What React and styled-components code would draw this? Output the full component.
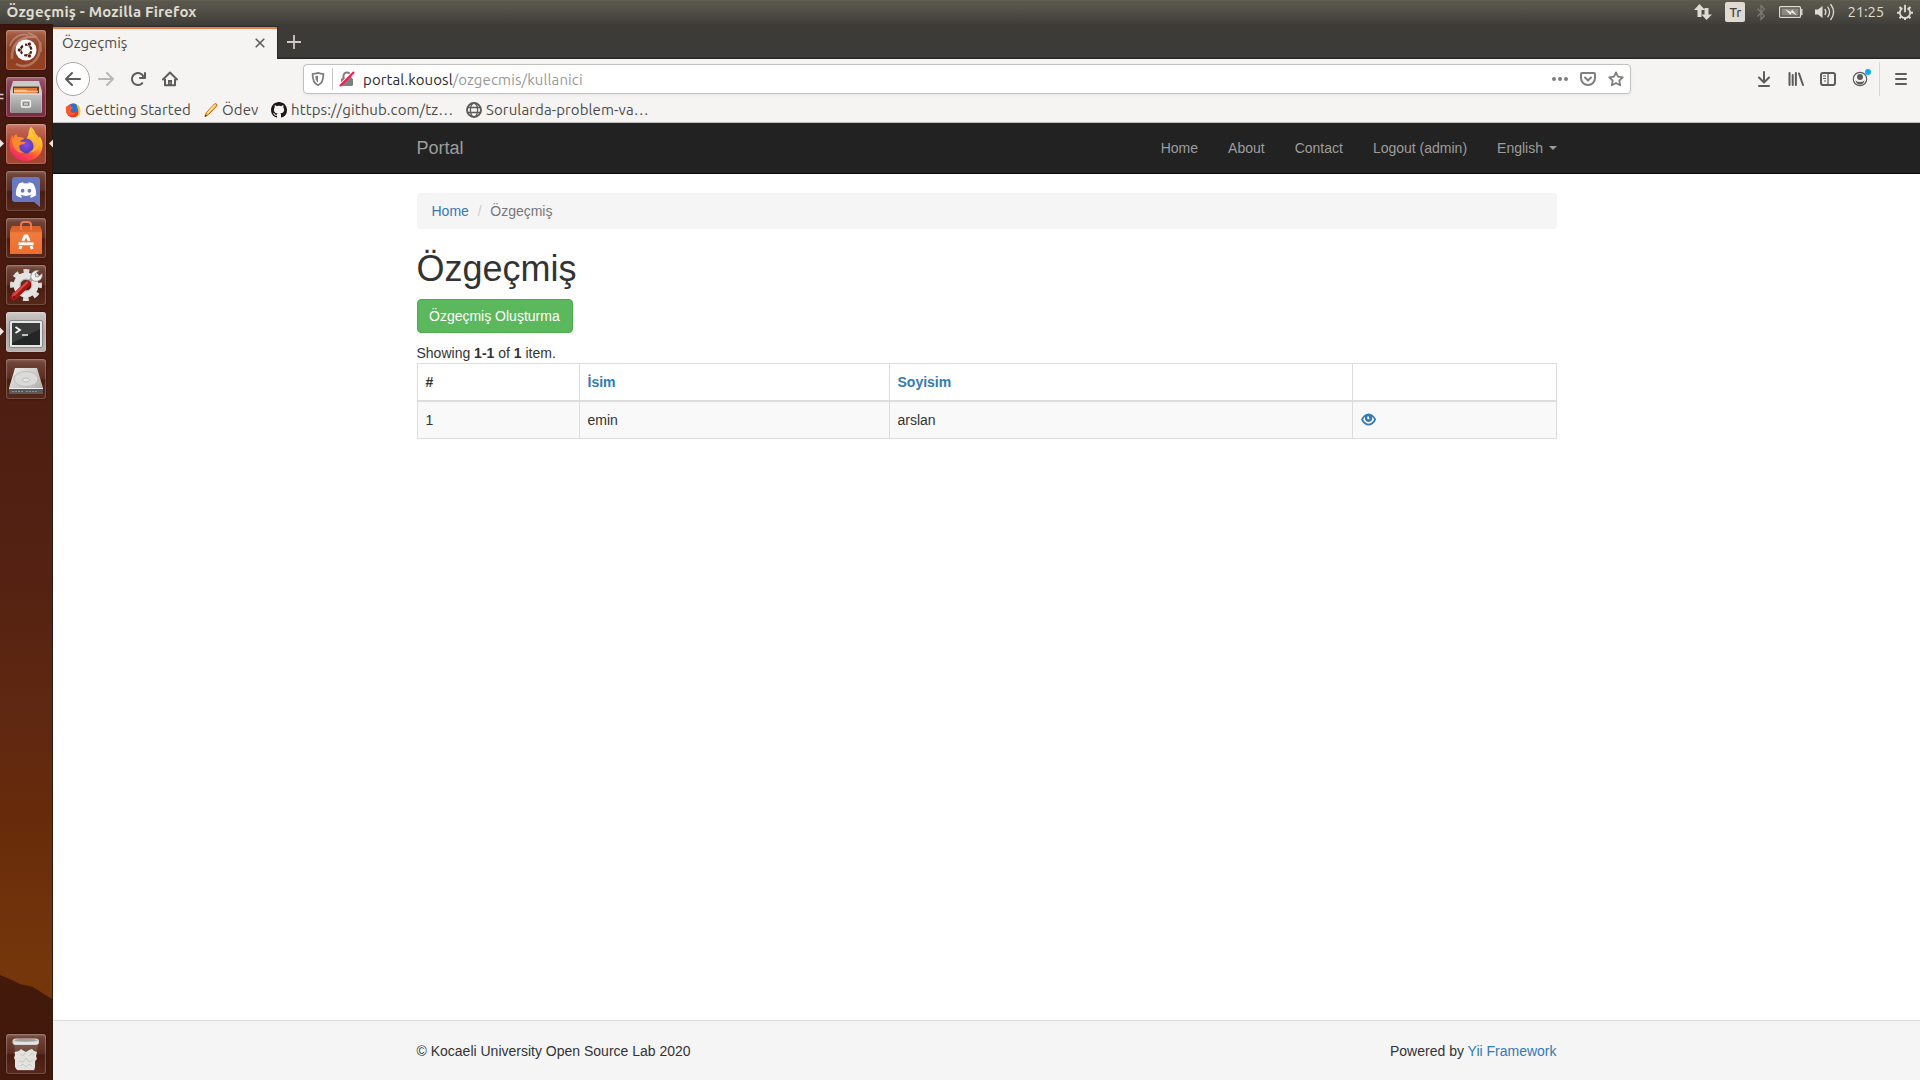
import React from "react";
import styled, { createGlobalStyle } from "styled-components";
import { FaDiscord } from "react-icons/fa";

const uiFont = `Ubuntu, "Noto Sans", "Open Sans", sans-serif`;

const GlobalStyle = createGlobalStyle`
  *, *::before, *::after { box-sizing: border-box; }
  body { margin: 0; background: #fff; overflow: hidden; }
  svg { display: block; flex: none; }
`;

/* ---------- desktop ---------- */
const Desktop = styled.div`
  width: 1920px;
  height: 1080px;
  display: grid;
  grid-template: 24px 1056px / 53px 1867px;
  overflow: hidden;
`;
const TopPanel = styled.header`
  grid-column: 1 / -1;
  display: flex;
  align-items: center;
  justify-content: space-between;
  padding: 0 7.500px 0 6.500px;
  background: linear-gradient(#66634f 0, #5a574e 1px, #555249 8px, #3f3e39 24px);
  font-family: ${uiFont};
  color: #dfdbd2;
`;
const Text = styled.span`
  font-family: ${uiFont};
  font-size: ${(p) => p.$size || 15}px;
  font-weight: ${(p) => p.$weight || 400};
  letter-spacing: ${(p) => p.$track ?? 0.11}px;
  color: ${(p) => p.$color || "inherit"};
  line-height: 20px;
  white-space: pre;
`;
const Tray = styled.div`
  display: flex;
  align-items: center;
`;
const TrayItem = styled.div`
  display: flex;
  margin-left: ${(p) => p.$gap}px;
`;
const Layout = styled.div`
  width: 20px;
  height: 20px;
  border-radius: 2px;
  background: #dfdbd2;
  color: #45443e;
  display: flex;
  align-items: center;
  justify-content: center;
`;

/* ---------- launcher ---------- */
const Launcher = styled.aside`
  position: relative;
  display: flex;
  flex-direction: column;
  gap: 7px;
  padding: 6px 6px 6px;
  border-right: 1px solid #2a1a16;
  background: linear-gradient(#38120a 0, #43180d 12px, #47190e 200px, #4e1e12 376px, #552212 560px, #5f2811 690px, #672b0b 790px, #74360a 940px, #7a3b0a 1056px);
`;
const Hill = styled.svg`
  position: absolute;
  left: 0;
  bottom: 0;
`;
const Tile = styled.div`
  position: relative;
  width: 40px;
  height: 40px;
  flex: none;
  border-radius: 3px;
  background: ${(p) => p.$bg};
  box-shadow: inset 0 0 0 1px rgba(255, 255, 255, 0.17), inset 0 2px 3px rgba(255, 255, 255, 0.16), 0 0 2px rgba(0, 0, 0, 0.6);
  margin-top: ${(p) => (p.$last ? "auto" : 0)};
`;
const Pip = styled.svg`
  position: absolute;
  top: 15px;
  ${(p) => (p.$right ? "right: -7px;" : "left: -6px;")}
`;

/* ---------- browser ---------- */
const Browser = styled.main`
  display: flex;
  flex-direction: column;
  background: #fff;
`;
const TabStrip = styled.div`
  height: 35px;
  padding-top: 2px;
  display: flex;
  background: linear-gradient(#3c3b37 33px, #272622 34px);
`;
const Tab = styled.div`
  width: 225px;
  display: flex;
  align-items: center;
  justify-content: space-between;
  padding: 0 12px 1px 9px;
  background: #f5f4f2;
  border-top: 1px solid #2c2a26;
  border-right: 1px solid #2c2a26;
  box-shadow: inset 0 2px 0 #ee7f4d;
  color: #4c4c4c;
`;
const NewTab = styled.div`
  padding: 9px 0 0 9px;
`;
const Toolbar = styled.div`
  height: 40px;
  display: flex;
  align-items: center;
  padding: 0 3px;
  background: #f5f4f2;
  color: #5c5c5b;
`;
const BackButton = styled.div`
  width: 34px;
  height: 34px;
  border-radius: 50%;
  border: 1px solid #aaa9a7;
  background: #fff;
  display: flex;
  align-items: center;
  justify-content: center;
`;
const ToolIcon = styled.div`
  width: 32px;
  flex: none;
  display: flex;
  justify-content: center;
`;
const AddressBar = styled.div`
  width: 1328px;
  height: 30px;
  flex: none;
  margin: 0 117px;
  display: flex;
  align-items: center;
  background: #fff;
  border: 1px solid #c3c1bd;
  border-radius: 4px;
  box-shadow: 0 1px 3px rgba(0, 0, 0, 0.06);
  padding: 0 6px;
  color: #7f7f7f;
`;
const Address = styled.div`
  flex: 1;
  margin-left: 8px;
  padding-top: 1px;
  display: flex;
`;
const Divider = styled.div`
  width: 1px;
  height: ${(p) => p.$h}px;
  background: ${(p) => p.$c};
  margin: ${(p) => p.$m};
`;
const UrlIcons = styled.div`
  display: flex;
  gap: 12px;
`;
const Bookmarks = styled.div`
  height: 24px;
  display: flex;
  align-items: center;
  padding: 0 0 1px 12px;
  background: #f5f4f2;
  border-bottom: 1px solid #c0bfbd;
  color: #4c4c4c;
`;
const Bookmark = styled.div`
  display: flex;
  align-items: center;
  gap: 4px;
  width: ${(p) => p.$w}px;
`;

/* ---------- page ---------- */
const Page = styled.div`
  flex: 1;
  display: flex;
  flex-direction: column;
  font: 14px/20px "Helvetica Neue", "Liberation Sans", Arial, sans-serif;
  color: #333;
`;
const Container = styled.div`
  width: 1140px;
  margin: 0 auto;
`;
const Navbar = styled.nav`
  height: 51px;
  background: #222;
  border-bottom: 1px solid #080808;
`;
const NavRow = styled(Container)`
  display: flex;
  justify-content: space-between;
  color: #9d9d9d;
`;
const Brand = styled.div`
  font-size: 18px;
  padding: 15px 0;
`;
const NavLinks = styled.div`
  display: flex;
  margin-right: -15.500px;
`;
const NavLink = styled.a`
  padding: 15px;
  display: flex;
  align-items: center;
`;
const Caret = styled.i`
  margin-left: 6px;
  border-top: 4px solid;
  border-left: 4px solid transparent;
  border-right: 4px solid transparent;
`;
const Content = styled(Container)`
  flex: 1;
  padding-top: 19px;
`;
const Breadcrumb = styled.div`
  height: 36px;
  padding: 8px 15px;
  border-radius: 4px;
  background: #f5f5f5;
  color: #777;
`;
const Slash = styled.span`
  color: #ccc;
  padding: 0 8.500px 0 9px;
`;
const Link = styled.a`
  color: #337ab7;
`;
const Title = styled.h1`
  margin: 20px 0 10px;
  font-size: 36px;
  font-weight: 400;
  line-height: 40px;
`;
const CreateButton = styled.button`
  display: block;
  height: 34px;
  padding: 6px 12px 6px 11.500px;
  font: inherit;
  color: #fff;
  background: #5cb85c;
  border: 1px solid #4cae4c;
  border-radius: 4px;
  margin-bottom: 10px;
`;
const Table = styled.table`
  width: 1139px;
  table-layout: fixed;
  border-collapse: collapse;
  th, td {
    border: 1px solid #ddd;
    padding: 8px;
    text-align: left;
    height: 37px;
  }
  th { border-bottom-width: 2px; }
  td { background: #f9f9f9; }
`;
const Col = styled.col`
  width: ${(p) => p.$w}px;
`;
const Footer = styled.footer`
  height: 60px;
  background: #f5f5f5;
  border-top: 1px solid #ddd;
  padding-top: 20px;
`;
const FooterRow = styled(Container)`
  display: flex;
  justify-content: space-between;
`;

/* ---------- icons ---------- */
const Svg = ({ s = 16, w = s, h = s, children, ...rest }) => (
  <svg width={w} height={h} viewBox={`0 0 ${w} ${h}`} fill="none" {...rest}>
    {children}
  </svg>
);

const Firefox = ({ size }) => (
  <svg width={size} height={size} viewBox="0 0 40 40">
    <defs>
      <linearGradient id="fx" x1=".8" y1=".05" x2=".25" y2=".95">
        <stop offset="0" stopColor="#fff04a" />
        <stop offset=".35" stopColor="#ffb02e" />
        <stop offset=".65" stopColor="#ff5a36" />
        <stop offset="1" stopColor="#f0246a" />
      </linearGradient>
      <radialGradient id="fxb" cx=".5" cy=".4" r=".6">
        <stop offset="0" stopColor="#8a4be8" />
        <stop offset="1" stopColor="#4d3bb8" />
      </radialGradient>
    </defs>
    <path fill="url(#fx)" d="M25 3c2 2 4 4 4.500 7 1.500 1 2.500 2 3.500 4l.8-1.500C36 16 37 19 36.500 23 35.500 31.500 28.500 37 20 37 11 37 4 30.500 3.500 22 3.300 17 5 13 6.500 11l.6 3c1-2 2.200-3.200 3.400-4 0 1.500.5 2.500 1.500 3.200 3-.6 5 .5 6.500 1.800 0 0-3.500.3-4.500 2.500l6-1c1-4 2.500-5 2.500-6.500C22.500 8 23 5 25 3z" />
    <circle cx="20" cy="22" r="7.500" fill="url(#fxb)" />
    <path fill="#ff8a2a" d="M6 16c4-4 8-3.800 12.500-1-3 .4-4 1.200-4.500 2.500 2 .5 4 0 6 .8-2 2.500-5 1.700-6.500 3.200-.6 3 1 6 5 7-6 1.500-12-3-12.500-12.500z" />
    <path fill="#ffb42c" d="M25 3c-2 5 5 9 4.500 17-.3 4-3 7-7 8.500 7 .5 11-4 11-10.500C33.500 11 27 9 25 3z" opacity=".85" />
  </svg>
);

const Ubuntu = () => (
  <Svg s={40}>
    <g stroke="#fff" fill="none" opacity=".28" strokeWidth="2.500">
      <path d="M6 29C5 15 14 5 31 7" />
      <path d="M10 34C22 40 36 31 34 12" />
      <path d="M22 3c9 2 14 10 13 19M4 16C6 8 14 3 22 5" strokeWidth="1.500" />
    </g>
    <circle cx="20" cy="20" r="10.500" fill="#fff" />
    <circle cx="20" cy="20" r="5.300" stroke="#4c1c0f" strokeWidth="2.300" strokeDasharray="8.700 2.400" strokeDashoffset="-1.200" />
    <g fill="#4c1c0f" stroke="#fff" strokeWidth=".7">
      <circle cx="13.300" cy="20" r="2" />
      <circle cx="23.400" cy="14.100" r="2" />
      <circle cx="23.400" cy="25.900" r="2" />
    </g>
  </Svg>
);

const Files = () => (
  <Svg s={40}>
    <defs>
      <linearGradient id="cab" x1="0" x2="0" y1="0" y2="1">
        <stop stopColor="#c6c6c4" />
        <stop offset="1" stopColor="#8e8e8c" />
      </linearGradient>
    </defs>
    <path d="M7 4h26l3 10v20q0 2-2 2H6q-2 0-2-2V14z" fill="#cacac8" />
    <path d="M7 9.500h26v8H7z" fill="#5f4033" />
    <path d="M8 11h23v6H8z" fill="#e2742f" />
    <path d="M8 12.800h12l1.500 1H32v1.400H8z" fill="#f4c898" />
    <path d="M4.500 16.500h31V34q0 2-2 2h-27q-2 0-2-2z" fill="url(#cab)" />
    <path d="M5 17h30" stroke="#e4e4e2" />
    <rect x="15.500" y="23.500" width="9" height="6.500" rx="1" fill="#b0b0ae" stroke="#f2f2f0" strokeWidth="1.300" />
    <path d="M17.500 26h5v2h-5z" fill="#fff" stroke="#6d6d6b" strokeWidth=".8" />
  </Svg>
);

const Discord = () => (
  <Svg s={40}>
    <path d="M9 6h22q3 0 3 3v27l-6-5H9q-3 0-3-3V9q0-3 3-3z" fill="#6878c4" />
    <FaDiscord x="9" y="8" size={22} color="#fff" />
  </Svg>
);

const Software = () => (
  <Svg s={40}>
    <defs>
      <linearGradient id="bag" x1="0" x2="0" y1="0" y2="1">
        <stop stopColor="#e3662d" />
        <stop offset=".3" stopColor="#f17a3c" />
        <stop offset="1" stopColor="#ee6d2c" />
      </linearGradient>
    </defs>
    <path d="M6 8h28l2 5v23H4V13z" fill="url(#bag)" />
    <path d="M4 14L7 8h26l3 6z" fill="#c8551f" opacity=".4" />
    <path d="M15 12V7q0-3 3-3h4q3 0 3 3v5" stroke="#e77a54" strokeWidth="2" />
    <path d="M16.800 23L19 18h2l2.200 5M15 28l-1.200 3M25 28l1.200 3" stroke="#fff" strokeWidth="3" strokeLinejoin="round" />
    <path d="M12.500 25.800h15" stroke="#fff" strokeWidth="2.800" />
  </Svg>
);

const Settings = () => (
  <Svg s={40}>
    <circle cx="20" cy="20" r="13.500" stroke="#dcdcda" strokeWidth="5" strokeDasharray="5.600 5" strokeDashoffset="2.800" />
    <circle cx="20" cy="20" r="9" stroke="#e4e4e2" strokeWidth="7" />
    <circle cx="20" cy="20" r="6" stroke="#a8a8a6" strokeWidth=".8" />
    <path d="M21.500 18l7-6.500" stroke="#a2a2a0" strokeWidth="3.500" />
    <path d="M33 5.500l-4 3.500.5 2.500 2.500.5 4-3.500c.8 3-.5 6.500-4 7.500-3 1-6-.3-7-3-1-4 2.500-8.500 8-7.500z" fill="#f1f1ef" stroke="#888885" strokeWidth=".8" />
    <path d="M7.500 32.500L22 18.500" stroke="#a71715" strokeWidth="6" strokeLinecap="round" />
    <path d="M7 31L21 17.500" stroke="#e24643" strokeWidth="2.200" strokeLinecap="round" />
    <circle cx="8" cy="32" r="1" fill="#651010" />
  </Svg>
);

const Terminal = () => (
  <Svg s={40}>
    <rect x="3.500" y="8.500" width="33" height="27" rx="1.500" fill="#e5e5e3" stroke="#878785" />
    <rect x="6" y="11" width="28" height="22" fill="#242625" />
    <path d="M6 11h28v6L6 31z" fill="#fff" opacity=".1" />
    <path d="M9.500 15l4.500 3-4.500 3" stroke="#fff" strokeWidth="1.700" />
    <path d="M16 23h6" stroke="#e3e3e3" strokeWidth="1.600" />
  </Svg>
);

const Drive = () => (
  <Svg s={40}>
    <defs>
      <linearGradient id="hd" x1="0" x2="1" y1="0" y2="1">
        <stop stopColor="#eeeeec" />
        <stop offset="1" stopColor="#a8a8a6" />
      </linearGradient>
    </defs>
    <path d="M9 9h22l6 20v6H3v-6z" fill="url(#hd)" />
    <ellipse cx="20" cy="20" rx="12" ry="7.500" fill="#dadad8" stroke="#b5b5b3" strokeWidth=".8" />
    <ellipse cx="20" cy="21" rx="3.500" ry="2" fill="#e9e9e7" stroke="#aaa" strokeWidth=".7" />
    <path d="M3 29.500h34V35H3z" fill="#59595a" />
    <path d="M3 29.500h34" stroke="#f1f1ef" />
    <path d="M6 32.500h11M20 32.500h11" stroke="#8f8f8d" strokeDasharray="2 1" />
  </Svg>
);

const Trash = () => (
  <Svg s={40}>
    <path d="M8 10h24l-3.500 27h-17z" fill="#fff" opacity=".14" />
    <path d="M8.500 18l4.500-1 2-2 3 2 2 1 3-2 3-1 2 2 3 1-1 4 1 3-2 2v6l-1 3H11l-2-3V26l-1-2 1-3z" fill="#e2e2de" />
    <path d="M14 20l3 2 2-3M23 22l3-3 2 2M13 27l4 1 3-4 3 4 4-2M14 32l3-2 3 3 3-3 3 2" stroke="#c4c4c0" strokeWidth=".9" />
    <rect x="6.500" y="4.500" width="26.500" height="6.500" rx="3" fill="#d4d4d2" />
    <ellipse cx="19.700" cy="6.300" rx="11.500" ry="1.500" fill="#a19c97" />
    <path d="M8 9h24" stroke="#f3f3f1" />
  </Svg>
);

const Glass = "linear-gradient(#75483c, #5b2d21 48%, #4a1c10 52%, #56281b)";

const apps = [
  { key: "dash", icon: <Ubuntu />, bg: "linear-gradient(#a86248, #8e4024 50%, #96401f)" },
  { key: "files", icon: <Files />, bg: "linear-gradient(#975468, #7e2d45 50%, #812b43)", pip: "double" },
  { key: "firefox", icon: <Firefox size={40} />, bg: "linear-gradient(#c7705f, #a9442f 50%, #a64633)", pip: "both" },
  { key: "discord", icon: <Discord />, bg: Glass },
  { key: "software", icon: <Software />, bg: Glass },
  { key: "settings", icon: <Settings />, bg: Glass },
  { key: "terminal", icon: <Terminal />, bg: "linear-gradient(#cbc5c3, #aaa3a1 50%, #b8b2b0)", pip: "left" },
  { key: "drive", icon: <Drive />, bg: Glass },
  { key: "trash", icon: <Trash />, bg: Glass, last: true },
];

const AppTile = ({ icon, bg, pip, last }) => (
  <Tile $bg={bg} $last={last}>
    {icon}
    {(pip === "left" || pip === "both") && (
      <Pip width="4" height="9"><path d="M0 0.500L4 4.500L0 8.500z" fill="#ece5e2" /></Pip>
    )}
    {pip === "both" && (
      <Pip $right width="4" height="9"><path d="M4 0.500L0 4.500L4 8.500z" fill="#ece5e2" /></Pip>
    )}
    {pip === "double" && (
      <Pip width="4" height="9"><path d="M0 2.500h3.500M0 6.500h3.500" stroke="#d8ccc8" strokeWidth="1.400" /></Pip>
    )}
  </Tile>
);

const Indicators = () => (
  <Tray>
    <Svg w={18} h={18}>
      <path d="M5.500 1L11 7H7.500v7h-4V7H0zM12.500 17L7.500 11.500H10.500V5h4v6.500H18z" fill="#dfdbd2" />
    </Svg>
    <TrayItem $gap={13}><Layout><Text $size={13} $weight={500} $track={0}>Tr</Text></Layout></TrayItem>
    <TrayItem $gap={12}>
      <Svg w={8} h={17}><path d="M0.500 4.500L7.500 12L4 15.500V1.500L7.500 5L0.500 12.500" stroke="#7f7c74" strokeWidth="1.200" /></Svg>
    </TrayItem>
    <TrayItem $gap={14}>
      <Svg w={24} h={14}>
        <rect x=".6" y="1.600" width="20.800" height="10.800" rx="1" stroke="#dfdbd2" strokeWidth="1.200" />
        <path d="M22.200 4v6h1V4z" fill="#dfdbd2" stroke="#dfdbd2" strokeWidth=".5" />
        <path d="M2.500 3.500h17v7h-17z" fill="#8c8980" />
        <path d="M6 4l6 3 1-2.500L18 10.500l-5.500-3-1 2.500z" fill="#f0ece4" />
      </Svg>
    </TrayItem>
    <TrayItem $gap={12}>
      <Svg w={20} h={18}>
        <path d="M0 6.500h3L7.500 3v12L3 11.500H0z" fill="#dfdbd2" />
        <g stroke="#dfdbd2" strokeWidth="1.300" strokeLinecap="round">
          <path d="M10 6.500q1.800 2.500 0 5" />
          <path d="M12.800 4.200q3.600 4.800 0 9.600" />
          <path d="M15.800 1.500q5.600 7.500 0 15" />
        </g>
      </Svg>
    </TrayItem>
    <TrayItem $gap={12}><Text $size={15} $track={-0.2}>21:25</Text></TrayItem>
    <TrayItem $gap={12.5}>
      <Svg>
        <path d="M5.500 4.200a5.200 5.200 0 1 0 5 0" stroke="#dfdbd2" strokeWidth="1.800" />
        <path d="M8 .8v7.500" stroke="#dfdbd2" strokeWidth="1.800" />
        <path d="M13 8.700h3M0 8.700h3M8 13.500v2.500M11.500 12.200l2 2M4.500 12.200l-2 2M11.700 4.800l1.800-1.800M4.300 4.800l-1.800-1.800" stroke="#dfdbd2" strokeWidth="2" />
      </Svg>
    </TrayItem>
  </Tray>
);

const BackIcon = () => (
  <Svg fill="currentColor"><path d="M15 7H3.414l4.293-4.293a1 1 0 0 0-1.414-1.414l-6 6a1 1 0 0 0 0 1.414l6 6a1 1 0 0 0 1.414-1.414L3.414 9H15a1 1 0 0 0 0-2z" /></Svg>
);
const ForwardIcon = () => (
  <Svg><path fill="#b9b8b7" d="M15.707 7.293l-6-6a1 1 0 0 0-1.414 1.414L12.586 7H1a1 1 0 0 0 0 2h11.586l-4.293 4.293a1 1 0 1 0 1.414 1.414l6-6a1 1 0 0 0 0-1.414z" /></Svg>
);
const ReloadIcon = () => (
  <Svg><path fill="currentColor" d="M15 1a1 1 0 0 0-1 1v2.418A6.995 6.995 0 1 0 8 15a6.954 6.954 0 0 0 4.950-2.050 1 1 0 0 0-1.414-1.414A5.019 5.019 0 1 1 12.549 6H10a1 1 0 0 0 0 2h5a1 1 0 0 0 1-1V2a1 1 0 0 0-1-1z" /></Svg>
);
const HomeIcon = () => (
  <Svg stroke="currentColor">
    <path d="M1 8.500L8 1.500l7 7" strokeWidth="2" strokeLinecap="round" strokeLinejoin="round" />
    <path d="M3 8v6.200h10V8" strokeWidth="2" strokeLinejoin="round" />
    <path d="M6 14V9h4v5z" fill="currentColor" stroke="none" />
    <path d="M8 11.500v1" stroke="#f5f4f2" />
  </Svg>
);
const ShieldIcon = () => (
  <Svg>
    <path d="M8 1.800C5.500 2.600 4 2.800 2.600 3c0 6 1 9.600 5.400 11.200C12.400 12.600 13.400 9 13.400 3 12 2.800 10.500 2.600 8 1.800z" stroke="currentColor" strokeWidth="1.800" strokeLinejoin="round" />
    <path d="M8 4.500v7C5.800 10 5.400 8 5.300 5.200z" fill="currentColor" />
  </Svg>
);
const InsecureIcon = () => (
  <Svg>
    <path d="M4.500 8V5a3.500 3.500 0 0 1 7 0v3" stroke="currentColor" strokeWidth="2" />
    <rect x="2" y="7" width="12" height="8" rx="1.500" fill="currentColor" />
    <path d="M1 13.500L14 .5" stroke="#fff" strokeWidth="1.500" />
    <path d="M1.500 14.500L14.500 1.500" stroke="#ff1553" strokeWidth="2" strokeLinecap="round" />
  </Svg>
);
const DotsIcon = () => (
  <Svg fill="currentColor"><circle cx="2" cy="8" r="2" /><circle cx="8" cy="8" r="2" /><circle cx="14" cy="8" r="2" /></Svg>
);
const PocketIcon = () => (
  <Svg stroke="currentColor" strokeWidth="2" strokeLinecap="round" strokeLinejoin="round">
    <path d="M2 2h12q1 0 1 1v4a7 7 0 0 1-14 0V3q0-1 1-1z" />
    <path d="M5 6.500l3 3 3-3" />
  </Svg>
);
const StarIcon = () => (
  <Svg><path d="M8 1.400l2 4.300 4.800.6-3.500 3.200.9 4.800L8 12l-4.200 2.300.9-4.800L1.200 6.300l4.800-.6z" stroke="currentColor" strokeWidth="1.800" strokeLinejoin="round" /></Svg>
);
const DownloadIcon = () => (
  <Svg stroke="currentColor" strokeWidth="2" strokeLinecap="round" strokeLinejoin="round"><path d="M8 1v10M3 6.500L8 11.500l5-5M3 15h10" /></Svg>
);
const LibraryIcon = () => (
  <Svg stroke="currentColor" strokeWidth="2" strokeLinecap="round"><path d="M1.500 2v12M4.700 4v10M7.900 2v12M11 2.500l4 11.500" /></Svg>
);
const SidebarIcon = () => (
  <Svg stroke="currentColor" strokeWidth="2">
    <rect x="1" y="2" width="14" height="12" rx="2" />
    <path d="M8 2v12" strokeWidth="1.300" />
    <path d="M3 5h3M3 7.500h3M4 10h2" strokeWidth="1" />
  </Svg>
);
const AccountIcon = () => (
  <Svg w={22} h={22}>
    <circle cx="11" cy="11" r="6.700" stroke="currentColor" strokeWidth="1.200" />
    <circle cx="11" cy="9" r="3" fill="currentColor" />
    <path d="M6.500 12.500q2 1.500 4.500 1.500t4.500-1.500q-1 4-4.500 4t-4.500-4z" fill="currentColor" />
    <circle cx="19" cy="4" r="3" fill="#00b3f4" />
  </Svg>
);
const MenuIcon = () => (
  <Svg stroke="currentColor" strokeWidth="2" strokeLinecap="round"><path d="M3 3h10M3 8h10M3 13h10" /></Svg>
);
const PencilIcon = () => (
  <Svg w={14} h={16}>
    <path d="M1 14.500l1.500-4L10.500 2q1-1 2 0t0 2.200L4.500 12.500z" fill="#ffc83a" stroke="#c9541d" strokeWidth="1" />
    <path d="M3.500 11L11 3" stroke="#fff29a" strokeWidth="1.200" />
    <path d="M.7 14.800l.8-2.300 1.500 1.500z" fill="#3a2a20" />
  </Svg>
);
const GithubIcon = () => (
  <Svg><path fill="#1b1817" d="M8 0C3.580 0 0 3.580 0 8c0 3.540 2.290 6.530 5.470 7.590.4.070.55-.17.55-.38 0-.19-.01-.82-.01-1.490-2.010.37-2.530-.49-2.690-.94-.09-.23-.48-.94-.82-1.130-.28-.15-.68-.52-.01-.53.63-.01 1.080.58 1.230.82.72 1.210 1.870.87 2.330.66.070-.52.28-.87.51-1.070-1.780-.2-3.640-.89-3.640-3.950 0-.87.31-1.590.82-2.150-.08-.2-.36-1.020.08-2.120 0 0 .67-.21 2.200.82.64-.18 1.320-.27 2-.27s1.360.09 2 .27c1.530-1.040 2.200-.82 2.200-.82.44 1.100.16 1.920.08 2.120.51.56.82 1.270.82 2.150 0 3.070-1.870 3.750-3.650 3.950.29.25.54.73.54 1.480 0 1.070-.01 1.930-.01 2.200 0 .21.15.46.55.38A8.010 8.010 0 0 0 16 8c0-4.420-3.580-8-8-8z" /></Svg>
);
const GlobeIcon = () => (
  <Svg stroke="#5c5c5b" strokeWidth="1.300">
    <circle cx="8" cy="8" r="7" strokeWidth="1.900" />
    <ellipse cx="8" cy="8" rx="3.600" ry="7" />
    <path d="M1.500 5.500h13M1.500 10.500h13" />
  </Svg>
);
const BookmarkFox = () => (
  <Svg>
    <circle cx="8" cy="8.500" r="7" fill="#f5352f" />
    <path d="M4.500 3.200Q8 .2 11.500 2.500 13.500 5 12.500 8.500q-1.500 2.500-4 2.200-2.500-.7-3-2.700z" fill="#1f74dd" />
    <path d="M1 4l1.200 1C3 3.500 4.500 3 6 3.500 5.200 4.500 6.500 5 8 5.500 7.500 7 5.500 7 5.500 8.500c0 2 2.500 3 4.500 2 .5 2-4 4-6.500 2C1.500 11 .5 7 1 4z" fill="#ff5a2c" />
    <path d="M11 2.500c3 1 4.800 4 4.500 7-.4 3-2.500 5.500-5.500 6.300 3-2 3.500-4 3.300-6.500C13 6.500 12 4 11 2.500z" fill="#ffc422" />
  </Svg>
);
const EyeIcon = () => (
  <Svg w={16} h={20}>
    <path d="M0 9.500C3.700 1.500 11.500 1.500 15.200 9.500 11.500 17.500 3.700 17.500 0 9.500z" fill="#337ab7" />
    <path d="M2.100 9.700Q2.800 7.700 4 6.800 3.300 11.700 7.600 11.900 11.900 11.700 11.200 6.800q1.200.9 1.900 2.900Q7.600 17.500 2.100 9.700z" fill="#fff" />
    <path d="M6.100 7.700q0-1.700 1.600-1.800-.5 1.100.3 1.700.7.500.3 1.600-1.900.6-2.200-1.500z" fill="#fff" />
  </Svg>
);

const navItems = ["Home", "About", "Contact", "Logout (admin)"];

export default function App() {
  return (
    <Desktop>
      <GlobalStyle />
      <TopPanel>
        <Text $weight={700} $track={0.2}>Özgeçmiş - Mozilla Firefox</Text>
        <Indicators />
      </TopPanel>
      <Launcher>
        <Hill width="52" height="108">
          <path d="M0 3L12 8L20 12L33 15L52 27V108H0z" fill="#43190c" />
        </Hill>
        {apps.map(({ key, ...app }) => <AppTile key={key} {...app} />)}
      </Launcher>
      <Browser>
        <TabStrip>
          <Tab>
            <Text $track={0}>Özgeçmiş</Text>
            <Svg w={10} h={10} stroke="#5c5c5b" strokeWidth="1.600"><path d="M.7.7l8.600 8.600M9.300.7L.7 9.300" /></Svg>
          </Tab>
          <NewTab><Svg w={14} h={14} stroke="#cfcbc2" strokeWidth="1.800"><path d="M7 0v14M0 7h14" /></Svg></NewTab>
        </TabStrip>
        <Toolbar>
          <BackButton><BackIcon /></BackButton>
          <ToolIcon><ForwardIcon /></ToolIcon>
          <ToolIcon><ReloadIcon /></ToolIcon>
          <ToolIcon><HomeIcon /></ToolIcon>
          <AddressBar>
            <ShieldIcon />
            <Divider $h={22} $c="#c9c9c9" $m="0 6px 0 6px" />
            <InsecureIcon />
            <Address>
              <Text $color="#2b2b2b">portal.kouosl</Text>
              <Text $color="#999">/ozgecmis/kullanici</Text>
            </Address>
            <UrlIcons><DotsIcon /><PocketIcon /><StarIcon /></UrlIcons>
          </AddressBar>
          <ToolIcon><DownloadIcon /></ToolIcon>
          <ToolIcon><LibraryIcon /></ToolIcon>
          <ToolIcon><SidebarIcon /></ToolIcon>
          <ToolIcon><AccountIcon /></ToolIcon>
          <Divider $h={34} $c="#d8d7d5" $m="0 5px 0 3px" />
          <ToolIcon><MenuIcon /></ToolIcon>
        </Toolbar>
        <Bookmarks>
          <Bookmark $w={139}><BookmarkFox /><Text>Getting Started</Text></Bookmark>
          <Bookmark $w={67}><PencilIcon /><Text>Ödev</Text></Bookmark>
          <Bookmark $w={195}><GithubIcon /><Text>https://github.com/tz…</Text></Bookmark>
          <Bookmark $w={200}><GlobeIcon /><Text>Sorularda-problem-va…</Text></Bookmark>
        </Bookmarks>
        <Page>
          <Navbar>
            <NavRow>
              <Brand>Portal</Brand>
              <NavLinks>
                {navItems.map((n) => <NavLink key={n}>{n}</NavLink>)}
                <NavLink>English<Caret /></NavLink>
              </NavLinks>
            </NavRow>
          </Navbar>
          <Content>
            <Breadcrumb><Link>Home</Link><Slash>/</Slash>Özgeçmiş</Breadcrumb>
            <Title>Özgeçmiş</Title>
            <CreateButton>Özgeçmiş Oluşturma</CreateButton>
            <div>Showing <b>1-1</b> of <b>1</b> item.</div>
            <Table>
              <colgroup><Col $w={162} /><Col $w={310} /><Col $w={463} /><Col $w={204} /></colgroup>
              <thead>
                <tr><th>#</th><th><Link>İsim</Link></th><th><Link>Soyisim</Link></th><th /></tr>
              </thead>
              <tbody>
                <tr><td>1</td><td>emin</td><td>arslan</td><td><EyeIcon /></td></tr>
              </tbody>
            </Table>
          </Content>
          <Footer>
            <FooterRow>
              <span>© Kocaeli University Open Source Lab 2020</span>
              <span>Powered by <Link>Yii Framework</Link></span>
            </FooterRow>
          </Footer>
        </Page>
      </Browser>
    </Desktop>
  );
}
